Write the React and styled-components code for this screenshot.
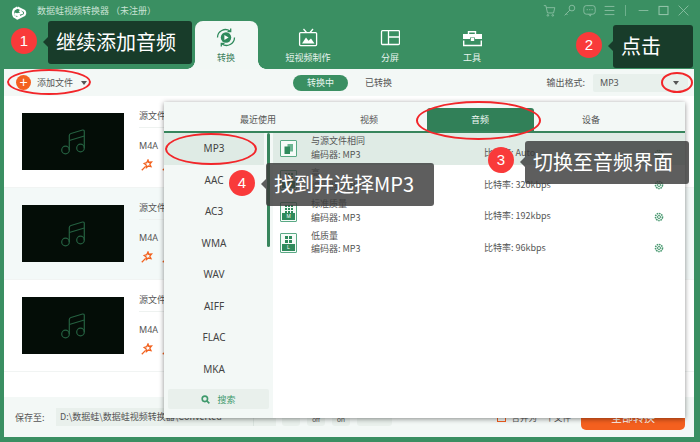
import React from 'react';
import styled, { createGlobalStyle } from 'styled-components';

const Global = createGlobalStyle`
  html, body { margin: 0; padding: 0; background: #3a8f62; }
  body { width: 700px; height: 442px; overflow: hidden; font-family: "Noto Sans CJK SC", "Noto Sans", sans-serif; }
  * { box-sizing: border-box; }
`;

const Window = styled.div`
  position: relative; width: 700px; height: 442px; background: #3a8f62; overflow: hidden;
  display: flex; flex-direction: column; font-size: 9px; color: #555;
`;
const TitleBar = styled.div`
  height: 21px; display: flex; align-items: center; padding: 0 10px 1px 11px; flex: none;
`;
const LogoWrap = styled.div` display: flex; margin-top: 5px; `;
const TitleText = styled.span` margin-left: 10px; font-size: 9px; flex: 1; white-space: nowrap; color: #c9e2d4; `;
const WinIcons = styled.div` display: flex; align-items: center; gap: 7px; color: #93c4aa; `;
const WinDivider = styled.span` width: 1px; height: 11px; background: #6eb08d; margin: 0 4px 0 2px; `;
const Nav = styled.div` height: 48px; flex: none; display: flex; padding-left: 185px; `;
const NavItem = styled.div`
  width: 82px; display: flex; justify-content: center; color: #e8f4ee; position: relative;
`;
const NavInner = styled.div`
  position: relative;
  width: 63px; display: flex; flex-direction: column; align-items: center; padding-top: 7px; gap: 3px; font-size: 9px;
  border-radius: 8px 8px 0 0;
  background: ${p => p.$active ? '#f2f8f5' : 'transparent'};
  color: ${p => p.$active ? '#3a7f5c' : '#e8f4ee'};
  white-space: nowrap;
  ${p => p.$active && `
    &::before, &::after { content: ''; position: absolute; bottom: 0; width: 8px; height: 8px; }
    &::before { left: -8px; background: radial-gradient(circle at 0 0, #3a8f62 7.5px, #f2f8f5 8px); }
    &::after { right: -8px; background: radial-gradient(circle at 100% 0, #3a8f62 7.5px, #f2f8f5 8px); }
  `}
`;
const Body = styled.div`
  flex: 1; margin: 0 6px 5px 4px; background: #fff; display: flex; flex-direction: column; min-height: 0;
`;
const Toolbar = styled.div`
  height: 27px; flex: none; background: #f3f8f6; display: flex; align-items: center; padding: 0 6px 0 12px; font-size: 9px;
`;
const AddFile = styled.div` display: flex; align-items: center; width: 277px; color: #555; `;
const PlusDot = styled.span`
  width: 15px; height: 15px; border-radius: 50%; background: #f4611f; color: #fff; font-size: 14px; line-height: 14px; text-align: center; margin-right: 6px; font-family: "Liberation Sans", sans-serif;
`;
const Caret = styled.span`
  width: 0; height: 0; border-left: 3.5px solid transparent; border-right: 3.5px solid transparent; border-top: 4px solid #555; margin-left: ${p => p.$ml}px;
`;
const Pill = styled.div`
  width: 55px; height: 16px; border-radius: 8px; text-align: center; line-height: 15px; margin-left: ${p => p.$ml || 0}px;
  background: ${p => p.$on ? '#3a8f62' : 'transparent'}; color: ${p => p.$on ? '#e9f5ef' : '#555'};
`;
const Spacer = styled.div` flex: 1; `;
const OutputLabel = styled.span` margin-right: 8px; `;
const FormatBox = styled.div`
  width: 95px; height: 18px; background: #e8f0ec; border-radius: 2px; display: flex; align-items: center; justify-content: space-between; padding: 0 9px 0 7px; font-family: "Noto Sans", sans-serif;
`;
const List = styled.div` flex: 1; display: flex; flex-direction: column; min-height: 0; `;
const Row = styled.div`
  height: 92px; flex: none; padding: 17px 0 0 18px; display: flex; gap: 15px; background: ${p => p.$alt ? '#f3f9f8' : '#fff'};
  border-bottom: 1px solid #f1f4f3;
`;
const Thumb = styled.div`
  width: 102px; height: 57px; background: #040d07; display: flex; align-items: center; justify-content: center; color: #256040;
`;
const Meta = styled.div` display: flex; flex-direction: column; font-size: 9px; width: 150px; `;
const MetaTop = styled.div` height: 17px; line-height: 10px; margin-top: -2px; border-bottom: 1px solid #eef2f0; `;
const MetaFmt = styled.div` margin-top: 12px; line-height: 12px; font-family: "Noto Sans", sans-serif; `;
const MetaIcons = styled.div` margin-top: 7px; margin-left: 2px; display: flex; gap: 9px; color: #f2621f; `;
const Footer = styled.div`
  height: 40px; flex: none; margin-top: auto; background: #f3f8f6; display: flex; align-items: center; padding: 0 9px 0 11px; font-size: 9px;
`;
const SaveLabel = styled.span` width: 41px; flex: none; `;
const PathBox = styled.div`
  width: 197px; height: 18px; background: #e9f0ec; line-height: 18px; padding-left: 4px; white-space: nowrap; overflow: hidden;
`;
const BrowseBox = styled.div` width: 23px; height: 18px; background: #e9f0ec; border-left: 1px solid #d9e3de; margin-right: 6px; `;
const IconBtn = styled.div`
  width: ${p => p.$w || 18}px; height: 18px; background: #e9f0ec; border-radius: 3px; margin-right: ${p => p.$mr || 7}px;
  text-align: center; font: 7px/24px "Liberation Sans", sans-serif; color: #555;
`;
const OrangeBtn = styled.div`
  width: 104px; height: 25px; background: #f4601f; border-radius: 5px; color: #fff; font-size: 11px; text-align: center; line-height: 24px;
`;
const Merge = styled.div` display: flex; align-items: center; gap: 5px; margin-right: 10px; font-size: 8.5px; white-space: nowrap; `;
const Check = styled.span` width: 9px; height: 9px; border: 1px solid #f4601f; `;

const Panel = styled.div`
  position: absolute; left: 164px; top: 102px; width: 521px; height: 316px; background: #fff;
  box-shadow: 0 1px 5px rgba(0,0,0,.45); display: flex; flex-direction: column;
`;
const PanelTabs = styled.div`
  height: 31px; flex: none; background: #f3f8f6; border-bottom: 2px solid #37855c; display: flex; gap: 4px; padding: 6px 0 0 40.5px;
`;
const PanelTab = styled.div`
  width: 107px; text-align: center; line-height: 24px; border-radius: 3px 3px 0 0; font-size: 9px;
  background: ${p => p.$on ? '#318058' : 'transparent'}; color: ${p => p.$on ? '#f0f8f4' : '#555'};
`;
const PanelBody = styled.div` flex: 1; display: flex; min-height: 0; `;
const FormatCol = styled.div`
  width: 109px; flex: none; background: #f3f8f6; position: relative; display: flex; flex-direction: column; font-family: "Noto Sans", sans-serif;
`;
const FormatItem = styled.div`
  width: 100px; height: 31.5px; line-height: 30px; text-align: center; font-size: 10px; color: #444;
  background: ${p => p.$on ? '#dfebe5' : 'transparent'};
`;
const ScrollThumb = styled.div` position: absolute; left: 103px; top: 0; width: 3px; height: 114px; background: #37855c; border-radius: 2px; `;
const SearchBox = styled.div`
  position: absolute; left: 4px; top: 256px; width: 101px; height: 20px; background: #e9f0ec; border-radius: 2px;
  display: flex; align-items: center; justify-content: center; gap: 7px; color: #3f9a6c; font-size: 9px; font-family: "Noto Sans CJK SC", sans-serif;
`;
const PresetCol = styled.div` flex: 1; display: flex; flex-direction: column; `;
const Preset = styled.div`
  height: 31.5px; flex: none; display: flex; align-items: center; padding-left: 7px; background: ${p => p.$on ? '#dfebe5' : 'transparent'};
`;
const PresetIcon = styled.div`
  width: 17px; height: ${p => p.$tall ? 20 : 17}px; border: 1px solid #5aa985; border-radius: 1px; background: #f6fbf8; flex: none; color: #2f8a5c;
  display: flex; flex-direction: column; align-items: center; justify-content: ${p => p.$tall ? 'space-between' : 'center'}; padding: ${p => p.$tall ? '2px 1px 1px' : '0'}; overflow: hidden;
`;
const PresetText = styled.div` margin-left: 14px; width: 173px; line-height: 13.5px; font-size: 9px; color: #555; white-space: nowrap; margin-top: -2px; `;
const Rate = styled.div` width: 170px; font-size: 9px; margin-top: 8px; color: #555; white-space: nowrap; `;
const Gear = styled.div` color: #4b9a72; margin-top: 10px; display: flex; `;
const QualityBar = styled.div` align-self: stretch; height: 7px; background: #2f8a5c; color: #fff; font-size: 5px; line-height: 7px; text-align: center; font-family: "Liberation Sans", sans-serif; `;
const QualityGrid = styled.div` display: grid; grid-template-columns: repeat(${p => p.$n}, ${p => p.$n === 3 ? 2 : 3}px); gap: 1px; `;
const QualityCell = styled.span` height: ${p => p.$n === 3 ? 2 : 3}px; background: #2f8a5c; `;

const Tip = styled.div`
  position: absolute; left: ${p => p.$x}px; top: ${p => p.$y}px; width: ${p => p.$w}px; height: 43px;
  background: ${p => p.$dim ? 'rgba(58,58,58,.82)' : '#183c2a'}; border-radius: 3px; color: #fff; font-size: 20px; line-height: 42px; padding-left: 8px; white-space: nowrap;
  &::before { content: ''; position: absolute; left: -5px; top: 16px; border: 5px solid transparent; border-left: 0; border-right-color: ${p => p.$dim ? 'rgba(58,58,58,.82)' : '#183c2a'}; }
`;
const Badge = styled.div`
  position: absolute; left: ${p => p.$x - 13}px; top: ${p => p.$y - 13}px; width: 26px; height: 26px; border-radius: 50%; background: #f93a3a; color: #fff;
  font: 15px/26px "Liberation Sans", sans-serif; text-align: center;
`;
const Ring = styled.div`
  position: absolute; left: ${p => p.$x}px; top: ${p => p.$y}px; width: ${p => p.$w}px; height: ${p => p.$h}px; border: 2px solid #f2262a; border-radius: 50%; pointer-events: none;
`;

const Logo = () => (
  <svg width="16" height="14" viewBox="0 0 16 14" fill="none" stroke="#fff" strokeWidth="2.2" strokeLinejoin="round">
    <path d="M6.5 1.5 L13.5 5 Q14.8 7 13.5 9 L6.5 12.5 L8 9.5 L3.5 7.5" />
    <path d="M6.5 1.5 L3 3.5 Q1 7 3 10.5 L6.5 12.5 M8.5 4.5 L11 7 L4 9" />
  </svg>
);
const S = ({ w = 13, h = 13, vb = '0 0 16 16', sw = 1, children }) => (
  <svg width={w} height={h} viewBox={vb} fill="none" stroke="currentColor" strokeWidth={sw}>{children}</svg>
);
const Note = () => (
  <S w={28} h={28} vb="0 0 28 28" sw={1.2}>
    <circle cx="6.5" cy="22" r="3.8" /><circle cx="21.5" cy="20" r="3.8" />
    <path d="M10.3 22 V7.5 Q10.3 6 12 5.5 L23.5 2 Q25.3 1.8 25.3 3.5 V20" /><path d="M10.3 12.5 L25.3 8" />
  </S>
);
const Convert = () => (
  <svg width="20" height="20" viewBox="0 0 20 20" fill="none" stroke="#2f8a5c" strokeWidth="1.3">
    <path d="M1.5 9.5 A8 8 0 0 1 14 3" /><path d="M18.5 9.5 A8 8 0 0 1 6 16" />
    <path d="M14.7 .5 V3.6 H11.5" /><path d="M5.3 18.5 V15.4 H8.5" />
    <circle cx="10" cy="9.5" r="5.2" fill="#2f8a5c" stroke="none" /><path d="M8.4 7 L12.6 9.5 L8.4 12 Z" fill="#fff" stroke="none" />
  </svg>
);
const TV = () => (
  <svg width="20" height="20" viewBox="0 0 20 20" fill="none" stroke="#fff" strokeWidth="1.3">
    <rect x="1.6" y="4.6" width="17" height="13" rx="1" /><path d="M5.5 1 L8.5 4.5 M15 1 L12 4.5" />
    <path d="M4 15.5 L8 9.5 L10.5 12.8 L13 10.5 L16.5 15.5 Z" fill="#fff" stroke="none" />
  </svg>
);
const Split = () => (
  <svg width="20" height="20" viewBox="0 0 20 20" fill="none" stroke="#fff" strokeWidth="1.3">
    <rect x="1.5" y="2.7" width="18" height="13.8" rx="1" /><path d="M8.5 2.7 V16.5 M8.5 9 H19.5" />
  </svg>
);
const Tools = () => (
  <svg width="20" height="20" viewBox="0 0 20 20" fill="none">
    <path d="M6.5 6 V3.7 H13.5 V6" stroke="#fff" strokeWidth="1.4" />
    <path d="M1 6 H20 V11 H13 V9.5 H8 V11 H1 Z" fill="#fff" />
    <rect x="8.8" y="10" width="3.4" height="3" fill="#fff" />
    <path d="M1.7 12.5 V17.5 H19.3 V12.5" stroke="#fff" strokeWidth="1.4" />
  </svg>
);
const Wand = () => (
  <S w={12} h={12} vb="0 0 12 12" sw={1.3}>
    <path d="M7 1 L7.7 3.2 L10.6 3 L8.8 5.2 L10 7.6 L7.2 7 L5.4 8.6 L5.2 6 L3.2 4.4 L5.8 3.6 Z" />
    <path d="M4.6 7.4 L.8 11.2" />
  </S>
);
const Cog = () => (
  <S w={10} h={10} vb="0 0 10 10" sw={1}>
    <circle cx="5" cy="5" r="1.5" /><circle cx="5" cy="5" r="3.5" strokeDasharray="1.6 .7" strokeWidth="1.6" />
  </S>
);
const Mag = () => (
  <S w={9} h={9} vb="0 0 10 10" sw={1.8}><circle cx="4.3" cy="4.3" r="3" /><path d="M6.5 6.5 L9.3 9.3" /></S>
);
const Copies = () => (
  <S w={11} h={12} vb="0 0 11 12" sw={0}>
    <rect x="4.5" y="1" width="5.5" height="7.5" fill="#6cb592" /><rect x="1.5" y="3.5" width="5.5" height="7.5" fill="#2f8a5c" />
  </S>
);

const presets = [
  { t: '与源文件相同', r: '比特率:  Auto', on: true },
  { t: '高', r: '比特率:  320kbps', n: 3, q: 'H' },
  { t: '标准质量', r: '比特率:  192kbps', n: 3, q: 'M' },
  { t: '低质量', r: '比特率:  96kbps', n: 2, q: 'L' },
];
const formats = ['MP3', 'AAC', 'AC3', 'WMA', 'WAV', 'AIFF', 'FLAC', 'MKA'];

export default function App() {
  return (
    <Window>
      <Global />
      <TitleBar>
        <LogoWrap><Logo /></LogoWrap>
        <TitleText>数据蛙视频转换器 （未注册）</TitleText>
        <WinIcons>
          <S><path d="M1 2 H3.5 L5.5 11 H13 L14.5 4.5 H4" /><circle cx="6" cy="14" r="1" /><circle cx="12" cy="14" r="1" /></S>
          <S><circle cx="11" cy="5" r="3.5" /><path d="M8.5 7.5 L2 14 M4 12 L5.5 13.5" /></S>
          <S><rect x="1" y="2" width="14" height="10.5" rx="3" /><path d="M7 12.5 L9 15 L10 12.5 M4.5 7 H6 M7.5 7 H9 M10.5 7 H12" /></S>
          <S><path d="M2 3 H14 M2 8 H14 M2 13 H14" /></S>
          <WinDivider />
          <S><path d="M2 8 H14" /></S>
          <S sw={1.3}><rect x="2.5" y="3" width="11" height="10" /></S>
          <S><path d="M2 2 L14 14 M14 2 L2 14" /></S>
        </WinIcons>
      </TitleBar>
      <Nav>
        <NavItem><NavInner $active><Convert />转换</NavInner></NavItem>
        <NavItem><NavInner><TV />短视频制作</NavInner></NavItem>
        <NavItem><NavInner><Split />分屏</NavInner></NavItem>
        <NavItem><NavInner><Tools />工具</NavInner></NavItem>
      </Nav>
      <Body>
        <Toolbar>
          <AddFile><PlusDot>+</PlusDot>添加文件<Caret $ml={8} /></AddFile>
          <Pill $on>转换中</Pill>
          <Pill $ml={3}>已转换</Pill>
          <Spacer />
          <OutputLabel>输出格式:</OutputLabel>
          <FormatBox>MP3<Caret $ml={0} /></FormatBox>
        </Toolbar>
        <List>
          {[0, 1, 2].map(i => (
            <Row key={i} $alt={i === 1}>
              <Thumb><Note /></Thumb>
              <Meta>
                <MetaTop>源文件</MetaTop>
                <MetaFmt>M4A</MetaFmt>
                <MetaIcons><Wand /><Wand /></MetaIcons>
              </Meta>
            </Row>
          ))}
        </List>
        <Footer>
          <SaveLabel>保存至:</SaveLabel>
          <PathBox>D:\数据蛙\数据蛙视频转换器\Converted</PathBox>
          <BrowseBox />
          <IconBtn />
          <IconBtn>off</IconBtn>
          <IconBtn>on</IconBtn>
          <IconBtn $w={35} $mr={1} />
          <Spacer />
          <Merge><Check />合并为一个文件</Merge>
          <OrangeBtn>全部转换</OrangeBtn>
        </Footer>
      </Body>

      <Panel>
        <PanelTabs>
          <PanelTab>最近使用</PanelTab>
          <PanelTab>视频</PanelTab>
          <PanelTab $on>音频</PanelTab>
          <PanelTab>设备</PanelTab>
        </PanelTabs>
        <PanelBody>
          <FormatCol>
            {formats.map((f, i) => <FormatItem key={f} $on={i === 0}>{f}</FormatItem>)}
            <ScrollThumb />
            <SearchBox><Mag />搜索</SearchBox>
          </FormatCol>
          <PresetCol>
            {presets.map(p => (
              <Preset key={p.t} $on={p.on}>
                <PresetIcon $tall={!p.on}>
                  {p.on ? <Copies /> : (
                    <>
                      <QualityGrid $n={p.n}>
                        {Array.from({ length: p.n * p.n }, (_, k) => <QualityCell key={k} $n={p.n} />)}
                      </QualityGrid>
                      <QualityBar>{p.q}</QualityBar>
                    </>
                  )}
                </PresetIcon>
                <PresetText>{p.t}<br />编码器:  MP3</PresetText>
                <Rate>{p.r}</Rate>
                <Gear><Cog /></Gear>
              </Preset>
            ))}
          </PresetCol>
        </PanelBody>
      </Panel>

      <Ring $x={7} $y={69} $w={84} $h={26} />
      <Ring $x={661} $y={72} $w={32} $h={21} />
      <Ring $x={416} $y={101} $w={125} $h={39} />
      <Ring $x={165} $y={133} $w={92} $h={32} />

      <Badge $x={24} $y={41}>1</Badge>
      <Tip $x={48} $y={21} $w={144}>继续添加音频</Tip>
      <Badge $x={589} $y={45}>2</Badge>
      <Tip $x={613} $y={25} $w={80}>点击</Tip>
      <Badge $x={501} $y={160}>3</Badge>
      <Tip $x={525} $y={141} $w={164} $dim>切换至音频界面</Tip>
      <Badge $x={242} $y={183}>4</Badge>
      <Tip $x={266} $y={163} $w={168} $dim>找到并选择MP3</Tip>
    </Window>
  );
}
